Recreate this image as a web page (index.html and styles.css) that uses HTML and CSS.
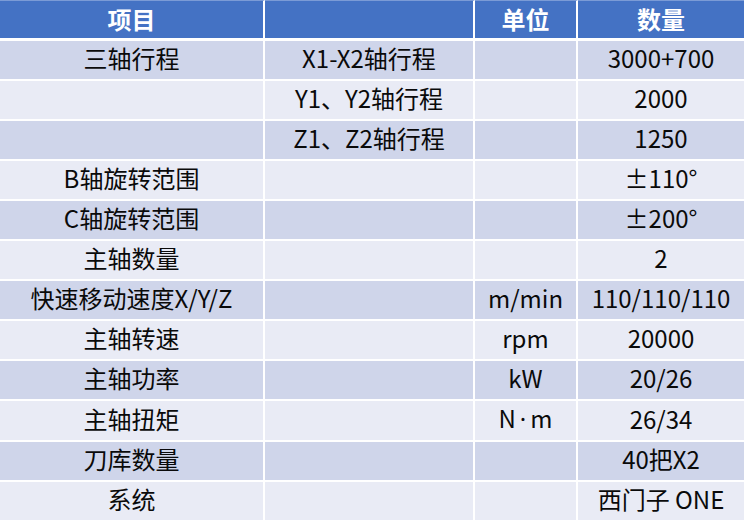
FILE: index.html
```html
<!DOCTYPE html>
<html lang="zh-CN">
<head>
<meta charset="utf-8">
<title>参数表</title>
<link rel="stylesheet" href="styles.css">
</head>
<body>
<table class="spec">
  <colgroup>
    <col class="c1"><col class="c2"><col class="c3"><col class="c4">
  </colgroup>
  <thead>
    <tr><th>项目</th><th></th><th>单位</th><th>数量</th></tr>
  </thead>
  <tbody>
    <tr class="dark"><td>三轴行程</td><td>X1-X2轴行程</td><td></td><td>3000+700</td></tr>
    <tr class="light"><td></td><td>Y1、Y2轴行程</td><td></td><td>2000</td></tr>
    <tr class="dark"><td></td><td>Z1、Z2轴行程</td><td></td><td>1250</td></tr>
    <tr class="light"><td>B轴旋转范围</td><td></td><td></td><td>±110°</td></tr>
    <tr class="dark"><td>C轴旋转范围</td><td></td><td></td><td>±200°</td></tr>
    <tr class="light"><td>主轴数量</td><td></td><td></td><td>2</td></tr>
    <tr class="dark"><td>快速移动速度X/Y/Z</td><td></td><td>m/min</td><td>110/110/110</td></tr>
    <tr class="light"><td>主轴转速</td><td></td><td>rpm</td><td>20000</td></tr>
    <tr class="dark"><td>主轴功率</td><td></td><td>kW</td><td>20/26</td></tr>
    <tr class="light"><td>主轴扭矩</td><td></td><td class="unit-nm">N<span class="dot">·</span>m</td><td>26/34</td></tr>
    <tr class="dark"><td>刀库数量</td><td></td><td></td><td>40把X2</td></tr>
    <tr class="light"><td>系统</td><td></td><td></td><td>西门子 ONE</td></tr>
  </tbody>
</table>
</body>
</html>
```

FILE: styles.css
```css
html, body {
  margin: 0;
  padding: 0;
  background: #ffffff;
}

.spec {
  width: 744px;
  table-layout: fixed;
  border-collapse: separate;
  border-spacing: 0;
  font-family: "Noto Sans CJK SC", "Noto Sans", sans-serif;
  font-size: 24px;
  color: #0a0a0a;
}

.c1 { width: 265px; }
.c2 { width: 210px; }
.c3 { width: 103px; }
.c4 { width: 166px; }

.spec th,
.spec td {
  box-sizing: border-box;
  padding: 0 0 4px 0;
  text-align: center;
  vertical-align: middle;
  white-space: nowrap;
  border-right: 2px solid #ffffff;
  border-bottom: 2px solid #ffffff;
  height: 40px;
  line-height: 34px;
}

.spec th:last-child,
.spec td:last-child {
  border-right: none;
}

.spec th {
  background: #4472c4;
  color: #ffffff;
  font-weight: 700;
  border-top: 1px solid #7b9bd6;
  border-bottom: 3px solid #ffffff;
  padding-bottom: 2px;
  height: 41px;
  line-height: 35px;
}

.dark td { background: #cfd5ea; }
.light td { background: #e9ebf5; }

.dot {
  font-family: "Noto Sans", sans-serif;
  margin: 0 4px;
}
```
